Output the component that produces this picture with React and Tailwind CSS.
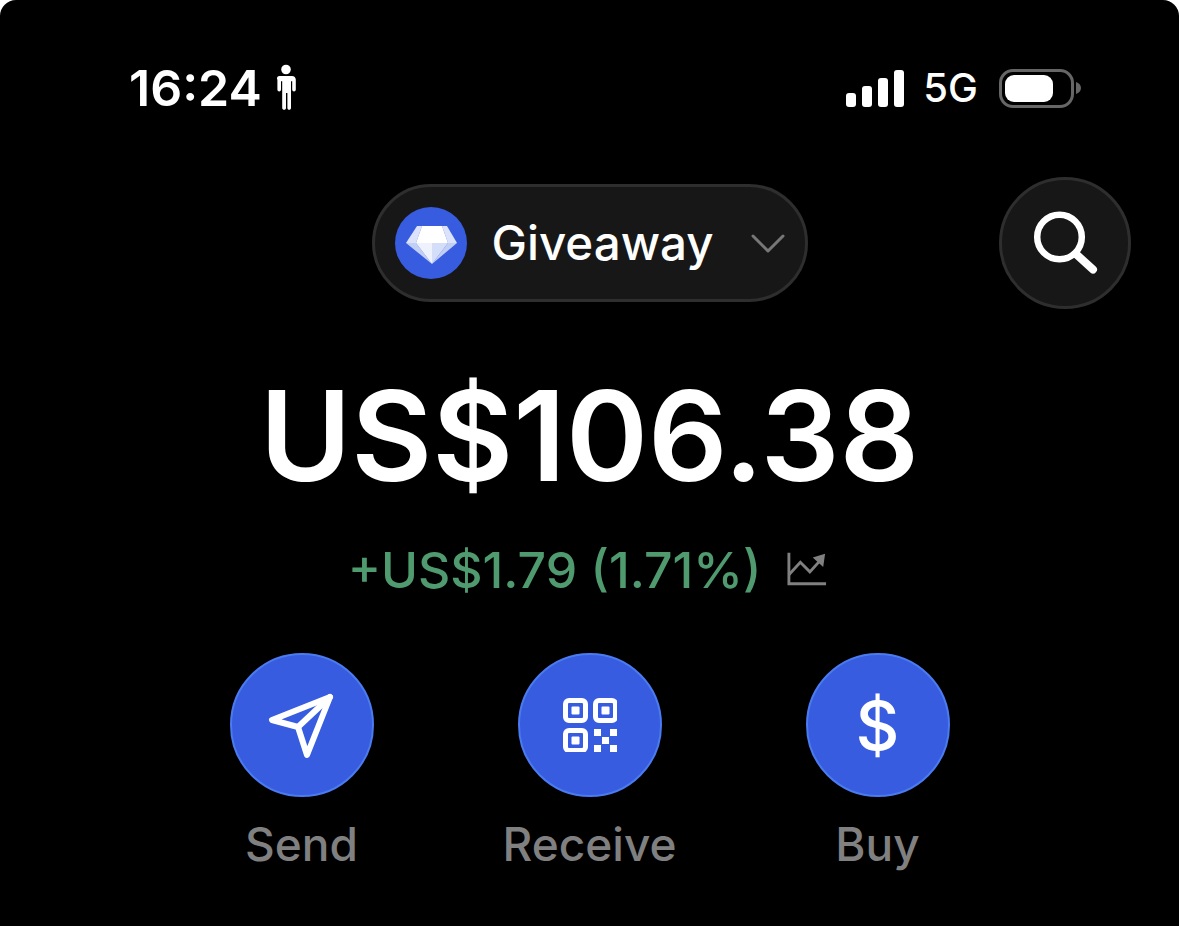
import React from 'react';

const PersonIcon = () => (
  <svg width="22" height="46" viewBox="0 0 22 46" fill="white" className="ml-[13px] mt-[-2px]">
    <circle cx="11" cy="5.500" r="4.800" />
    <path d="M5 12h12c2.200 0 3.800 1.600 3.800 3.800v9.600c0 1.200-.8 2-1.800 2s-1.800-.8-1.800-2v-8.200h-1.200V44c0 1-.8 1.800-1.800 1.800s-1.800-.8-1.800-1.800V29h-1.400v15c0 1-.8 1.800-1.800 1.800S7.200 45 7.200 44V17.200H6v8.200c0 1.200-.8 2-1.800 2s-1.800-.8-1.800-2v-9.600C1.200 13.600 2.800 12 5 12z" />
  </svg>
);

const SignalBars = () => (
  <div className="flex items-end gap-[6px] h-[37px]">
    <div className="w-[10px] h-[14px] rounded-[3px] bg-white" />
    <div className="w-[10px] h-[21px] rounded-[3px] bg-white" />
    <div className="w-[10px] h-[29px] rounded-[3px] bg-white" />
    <div className="w-[10px] h-[37px] rounded-[3px] bg-white" />
  </div>
);

const Battery = () => (
  <div className="flex items-center">
    <div className="w-[75px] h-[39px] rounded-[14px] border-[3px] border-[#666666] p-[3px]">
      <div className="w-[48px] h-full rounded-[9px] bg-white" />
    </div>
    <svg width="6" height="12" viewBox="0 0 6 12" className="ml-[2px]">
      <path d="M0 0c3 1 5 3 5 6s-2 5-5 6z" fill="#666666" />
    </svg>
  </div>
);

const Diamond = () => (
  <svg width="72" height="72" viewBox="0 0 72 72">
    <path d="M22 19H27L21 36H11Z" fill="#dbe3fa" />
    <path d="M52 19H47L53 36H62Z" fill="#dbe3fa" />
    <path d="M27 19H47L53 36H21Z" fill="#ffffff" />
    <path d="M11 36H21L37 57Z" fill="#c2cff5" />
    <path d="M62 36H53L37 57Z" fill="#c2cff5" />
    <path d="M21 36H37V57Z" fill="#eef2fd" />
    <path d="M53 36H37V57Z" fill="#d5def8" />
  </svg>
);

const Chevron = () => (
  <svg width="34" height="19" viewBox="0 0 34 19" fill="none" stroke="#777777" strokeWidth="3" strokeLinecap="round" strokeLinejoin="round" className="ml-[37px]">
    <path d="M2 2L17 17L32 2" />
  </svg>
);

const SearchIcon = () => (
  <svg width="66" height="66" viewBox="0 0 66 66" fill="none" stroke="white" strokeLinecap="round">
    <circle cx="27.500" cy="27" r="22.300" strokeWidth="6.500" />
    <path d="M44 44L61 59.500" strokeWidth="8" />
  </svg>
);

const ChartIcon = () => (
  <svg width="40" height="36" viewBox="0 0 42 36" fill="none" className="ml-[26px] mr-[4px] mt-[-2px]">
    <path d="M2 1V33.500H41" stroke="#808080" strokeWidth="3" />
    <path d="M2 24L14 11L24 21L34 10" stroke="#808080" strokeWidth="3" />
    <path d="M27 6L40 2L38 16Z" fill="#808080" />
  </svg>
);

const SendIcon = () => (
  <svg width="80" height="80" viewBox="0 0 80 80" fill="none" stroke="white" strokeWidth="6" strokeLinejoin="round" strokeLinecap="round">
    <path d="M68 12L10 35L36 42L45 70Z" />
    <path d="M36 42L68 12" />
  </svg>
);

const QrIcon = () => (
  <svg width="54" height="54" viewBox="0 0 54 54" fill="white">
    <g fill="none" stroke="white" strokeWidth="5">
      <rect x="2.500" y="2.500" width="20" height="20" rx="3.500" />
      <rect x="32.500" y="2.500" width="20" height="20" rx="3.500" />
      <rect x="2.500" y="32.500" width="20" height="20" rx="3.500" />
    </g>
    <rect x="8.500" y="8.500" width="8" height="8" rx="1" />
    <rect x="38.500" y="8.500" width="8" height="8" rx="1" />
    <rect x="8.500" y="38.500" width="8" height="8" rx="1" />
    <rect x="31" y="31" width="7" height="7" />
    <rect x="47" y="31" width="7" height="7" />
    <rect x="39" y="39" width="7" height="7" />
    <rect x="31" y="47" width="7" height="7" />
    <rect x="47" y="47" width="7" height="7" />
  </svg>
);

const ActionButton = ({ label, children }) => (
  <div className="w-[144px] flex flex-col items-center">
    <div className="w-[144px] h-[144px] rounded-full bg-[#375ce0] border-2 border-[#4a7bf0] flex items-center justify-center text-white">
      {children}
    </div>
    <span className="mt-[17px] text-[46px] leading-[60px] font-medium text-[#808080] whitespace-nowrap">{label}</span>
  </div>
);

export default function App() {
  return (
    <div className="bg-white font-['Inter',sans-serif]">
      <div className="w-full h-[926px] overflow-hidden bg-black rounded-t-[16px] flex flex-col">
        {/* Status bar */}
        <div className="flex items-center justify-between h-[46px] mt-[65px] pl-[129px] pr-[97px]">
          <div className="flex items-center text-white">
            <span className="text-[50px] leading-[46px] font-semibold">16:24</span>
            <PersonIcon />
          </div>
          <div className="flex items-center text-white">
            <SignalBars />
            <span className="ml-[19px] mr-[21px] text-[40px] leading-[46px] font-medium">5G</span>
            <Battery />
          </div>
        </div>

        {/* Account selector */}
        <div className="grid grid-cols-[1fr_auto_1fr] items-center mt-[66px] h-[132px]">
          <div />
          <div className="flex items-center w-[436px] h-[118px] rounded-full bg-[#171717] border-[3px] border-[#2e2e2e] pl-[20px]">
            <div className="w-[72px] h-[72px] rounded-full bg-[#375ce0]">
              <Diamond />
            </div>
            <span className="ml-[25px] text-[47.500px] leading-[60px] font-medium text-white">Giveaway</span>
            <Chevron />
          </div>
          <div className="flex justify-end pr-[48px]">
            <div className="w-[132px] h-[132px] rounded-full bg-[#171717] border-[3px] border-[#2e2e2e] flex items-center justify-center">
              <SearchIcon />
            </div>
          </div>
        </div>

        {/* Balance */}
        <div className="mt-[57px] text-center text-[124.500px] leading-[140px] font-semibold text-white">US$106.38</div>
        <div className="flex items-center justify-center mt-[34px] h-[60px]">
          <span className="text-[50px] leading-[60px] font-medium text-[#4f9a6e]">+US$1.79 (1.71%)</span>
          <ChartIcon />
        </div>

        {/* Actions */}
        <div className="flex justify-center gap-[144px] mt-[53px]">
          <ActionButton label="Send">
            <SendIcon />
          </ActionButton>
          <ActionButton label="Receive">
            <QrIcon />
          </ActionButton>
          <ActionButton label="Buy">
            <span className="text-[68px] leading-none font-medium">$</span>
          </ActionButton>
        </div>
      </div>
    </div>
  );
}
